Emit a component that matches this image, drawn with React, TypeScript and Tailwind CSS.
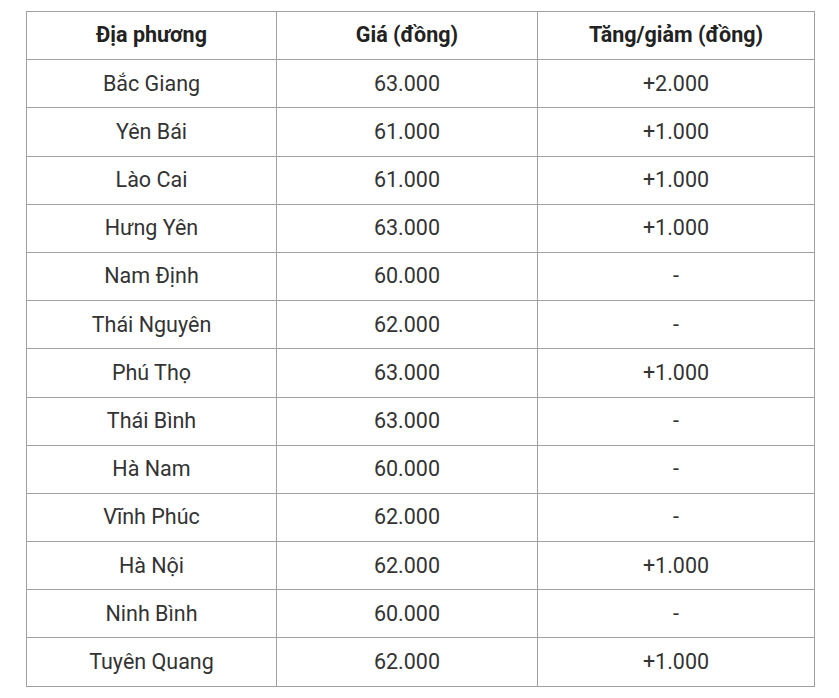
export default function App() {
  const rows = [
    ["Bắc Giang", "63.000", "+2.000"],
    ["Yên Bái", "61.000", "+1.000"],
    ["Lào Cai", "61.000", "+1.000"],
    ["Hưng Yên", "63.000", "+1.000"],
    ["Nam Định", "60.000", "-"],
    ["Thái Nguyên", "62.000", "-"],
    ["Phú Thọ", "63.000", "+1.000"],
    ["Thái Bình", "63.000", "-"],
    ["Hà Nam", "60.000", "-"],
    ["Vĩnh Phúc", "62.000", "-"],
    ["Hà Nội", "62.000", "+1.000"],
    ["Ninh Bình", "60.000", "-"],
    ["Tuyên Quang", "62.000", "+1.000"],
  ]

  return (
    <div className="min-h-screen bg-white pl-[26px] pt-[11px] font-['Roboto',sans-serif] text-[21.5px] text-[#333]">
      <table className="w-[789px] border-collapse table-fixed">
        <thead>
          <tr className="h-[48.2px]">
            <th className="w-[250px] border border-[#a0a0a0] text-center font-bold text-[#222]">Địa phương</th>
            <th className="w-[261px] border border-[#a0a0a0] text-center font-bold text-[#222]">Giá (đồng)</th>
            <th className="border border-[#a0a0a0] text-center font-bold text-[#222]">Tăng/giảm (đồng)</th>
          </tr>
        </thead>
        <tbody>
          {rows.map((row, i) => (
            <tr key={i} className="h-[48.2px]">
              {row.map((cell, j) => (
                <td key={j} className="border border-[#a0a0a0] text-center">
                  {cell}
                </td>
              ))}
            </tr>
          ))}
        </tbody>
      </table>
    </div>
  )
}
